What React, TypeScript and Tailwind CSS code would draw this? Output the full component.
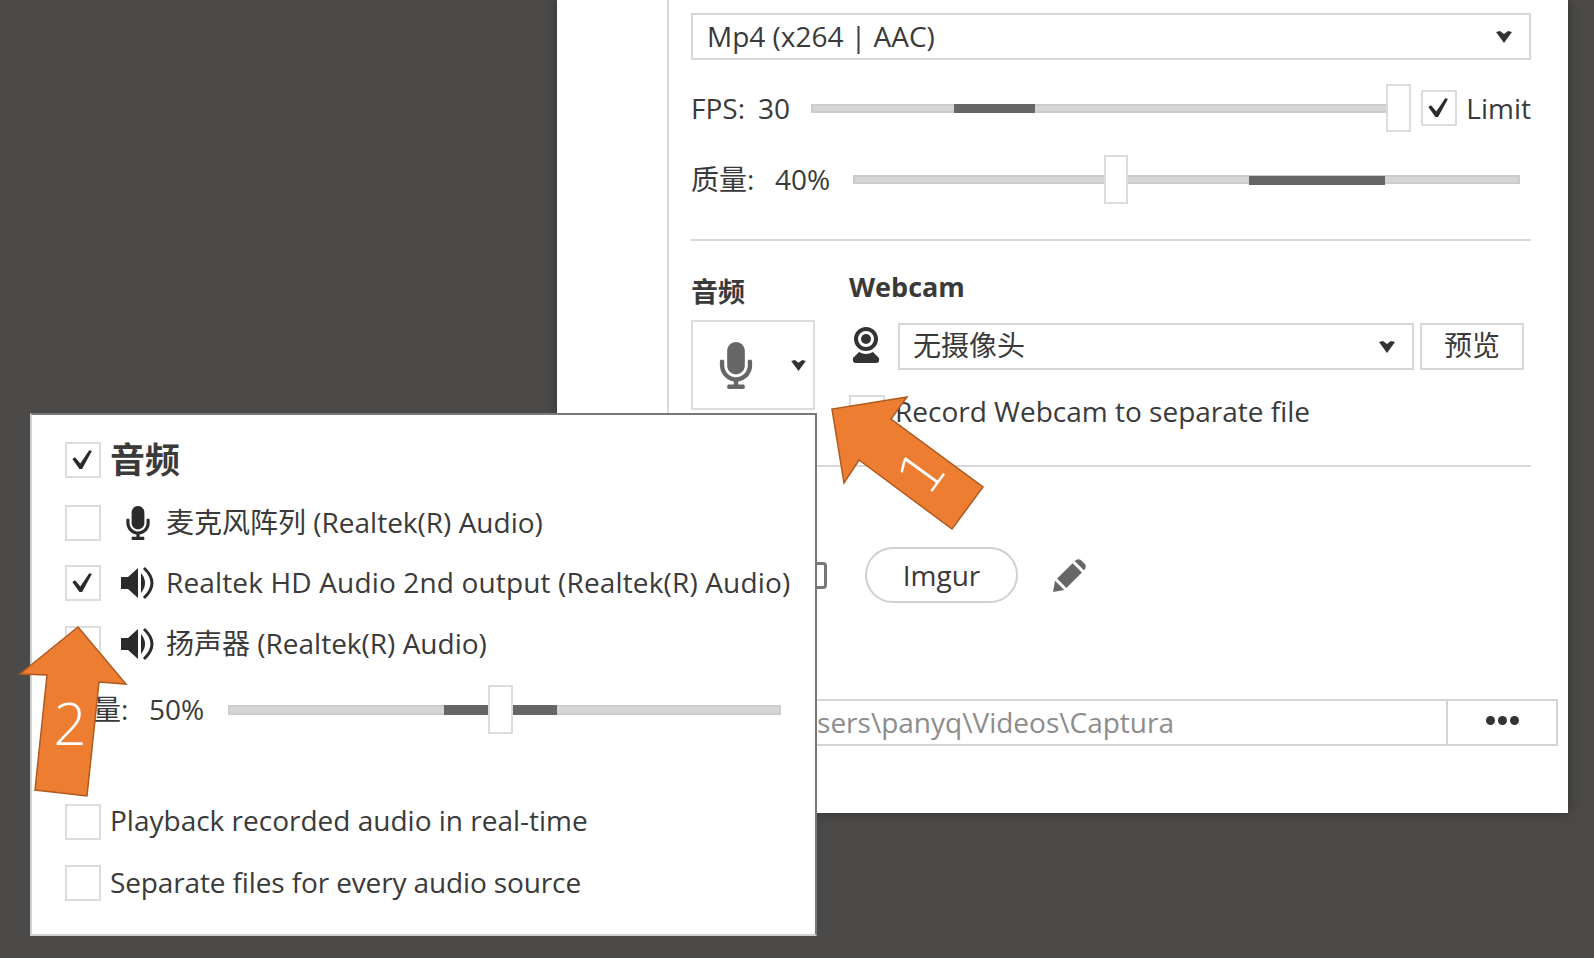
import React from "react";
import { FaMicrophone } from "react-icons/fa";

const font = "[font-family:'Open_Sans','Noto_Sans_CJK_SC',sans-serif]";

function Caret({ className }: { className: string }) {
  return (
    <svg viewBox="0 0 18 12" className={className} fill="#333">
      <path d="M1 1 L5 0 L9 3 L13 0 L17 1 L9 12 Z" />
    </svg>
  );
}

function Box({ checked }: { checked?: boolean }) {
  return (
    <div className="w-[36px] h-[36px] shrink-0 border-2 border-[#dcdcdc] bg-white flex items-center justify-center">
      {checked && (
        <svg viewBox="0 0 36 36" className="w-[36px] h-[36px]" fill="#2b2b2b">
          <path d="M6 17 L9 15 L15 22 L25 7 L28 8 L17 28 L14 28 Z" />
        </svg>
      )}
    </div>
  );
}

function Webcam() {
  return (
    <svg viewBox="0 0 28 36" className="w-[28px] h-[36px]" fill="#333">
      <path fillRule="evenodd" d="M14 0 A12 12 0 1 1 14 24 A12 12 0 1 1 14 0 Z M14 4 A8 8 0 1 0 14 20 A8 8 0 1 0 14 4 Z" />
      <circle cx="14" cy="12" r="5" />
      <path d="M7 25 Q14 29 21 25 L27 31 Q28 36 24 36 L4 36 Q0 36 1 31 Z" />
    </svg>
  );
}

function Speaker() {
  return (
    <svg viewBox="0 0 36 36" className="w-[36px] h-[36px]" fill="#2b2b2b">
      <path d="M1 12 L8 12 L18 3 L18 33 L8 24 L1 24 Z" />
      <path d="M21 8 Q29 18 21 28 Z" />
      <path d="M24 3 Q40 18 24 33" fill="none" stroke="#2b2b2b" strokeWidth="3" />
    </svg>
  );
}

function Pencil() {
  return (
    <svg viewBox="0 0 32 32" className="w-[33px] h-[33px]" fill="#666666">
      <path d="M4 19 L19 4 L28 13 L13 28 Z" />
      <path d="M0 32 L2 21 L11 30 Z" />
      <path d="M21 2 Q24 -1 27 1 L31 5 Q33 8 30 11 Z" />
    </svg>
  );
}

export default function App() {
  return (
    <div className={`relative w-[1594px] h-[958px] overflow-hidden bg-[#4b4a48] text-[#3a3a3a] text-[28px] ${font}`}>
      {/* main window */}
      <div className="absolute left-[557px] top-0 w-[1011px] h-[813px] bg-white shadow-[0_0_12px_rgba(0,0,0,0.35)] flex">
        <div className="w-[112px] shrink-0 border-r-2 border-[#dadada]" />
        <div className="w-[862px] pl-[22px] flex flex-col">
          <div className="w-[840px] mt-[13px] h-[47px] border-2 border-[#d6d6d6] flex items-center justify-between pl-[14px] pr-[16px]">
            <span className="-mt-[2px]">Mp4 (x264 | AAC)</span>
            <Caret className="w-[18px] h-[12px]" />
          </div>

          <div className="w-[840px] mt-[24px] h-[48px] flex items-center">
            <span className="w-[67px] shrink-0">FPS:</span>
            <span className="w-[53px] shrink-0">30</span>
            <div className="relative w-[600px] h-[48px] flex items-center">
              <div className="w-[597px] h-[9px] bg-[#d6d6d6] border-2 border-[#cccccc]" />
              <div className="absolute left-[143px] top-[20px] w-[81px] h-[9px] bg-[#666666]" />
              <div className="absolute left-[575px] top-0 w-[25px] h-[48px] bg-white border-2 border-[#dcdcdc]" />
            </div>
            <div className="ml-[11px]"><Box checked /></div>
            <span className="ml-[9px]">Limit</span>
          </div>

          <div className="w-[840px] mt-[23px] h-[49px] flex items-center">
            <span className="w-[84px] shrink-0 -mt-[2px]">质量:</span>
            <span className="w-[78px] shrink-0 -mt-[2px]">40%</span>
            <div className="relative w-[667px] h-[49px] flex items-center">
              <div className="w-[667px] h-[9px] bg-[#d6d6d6] border-2 border-[#cccccc]" />
              <div className="absolute left-[396px] top-[21px] w-[136px] h-[9px] bg-[#666666]" />
              <div className="absolute left-[251px] top-0 w-[24px] h-[49px] bg-white border-2 border-[#dcdcdc]" />
            </div>
          </div>

          <div className="w-[840px] mt-[35px] h-[2px] bg-[#d8d8d8]" />

          <div className="flex mt-[29px]">
            <div className="w-[158px] shrink-0">
              <div className="h-[36px] mt-[4px] leading-[36px] font-bold text-[27px]">音频</div>
              <div className="mt-[10px] w-[124px] h-[90px] border-2 border-[#dcdcdc] flex items-center pl-[26px] gap-[37px]">
                <FaMicrophone className="w-[34px] h-[47px] text-[#666666]" />
                <Caret className="w-[17px] h-[11px]" />
              </div>
            </div>
            <div className="w-[682px]">
              <div className="h-[34px] leading-[34px] font-bold text-[27px]">Webcam</div>
              <div className="flex items-center mt-[19px]">
                <div className="ml-[3px] mr-[18px] -mt-[4px]"><Webcam /></div>
                <div className="w-[516px] h-[47px] border-2 border-[#d6d6d6] flex items-center justify-between pl-[13px] pr-[16px]">
                  <span className="-mt-[4px]">无摄像头</span>
                  <Caret className="w-[18px] h-[12px]" />
                </div>
                <div className="ml-[6px] w-[104px] h-[47px] border-2 border-[#d6d6d6] flex items-center justify-center"><span className="-mt-[4px]">预览</span></div>
              </div>
              <div className="flex items-center mt-[23px]">
                <Box />
                <span className="ml-[10px] -mt-[3px]">Record Webcam to separate file</span>
              </div>
            </div>
          </div>

          <div className="w-[840px] mt-[33px] h-[2px] bg-[#d8d8d8]" />

          <div className="flex items-center mt-[80px] ml-[110px]">
            <div className="w-[26px] h-[27px] rounded-[4px] border-[3px] border-[#777777]" />
            <div className="ml-[38px] w-[153px] h-[56px] rounded-[28px] border-2 border-[#d0d0d0] flex items-center justify-center">Imgur</div>
            <div className="ml-[35px]"><Pencil /></div>
          </div>

          <div className="flex mt-[96px] w-[867px] h-[47px]">
            <div className="flex-1 min-w-0 border-2 border-r-0 border-[#d4d4d4] flex items-center justify-end pr-[272px] text-[#8c8c8c] whitespace-nowrap"><span className="-mt-[2px]">C:\Users\panyq\Videos\Captura</span></div>
            <div className="w-[112px] shrink-0 border-2 border-[#d4d4d4] flex items-center justify-center gap-[3px] pb-[4px]">
              <span className="w-[9px] h-[9px] rounded-full bg-[#333333]" />
              <span className="w-[9px] h-[9px] rounded-full bg-[#333333]" />
              <span className="w-[9px] h-[9px] rounded-full bg-[#333333]" />
            </div>
          </div>
        </div>
      </div>

      {/* audio popup */}
      <div className="absolute left-[30px] top-[413px] w-[787px] h-[523px] bg-white border-2 border-[#d0d0d0] border-t-[#777777] border-r-[#777777] pl-[33px] flex flex-col">
        <div className="flex items-center mt-[27px] h-[36px]">
          <Box checked />
          <span className="ml-[9px] font-bold text-[35px]">音频</span>
        </div>
        <div className="flex items-center mt-[27px] h-[36px]">
          <Box />
          <FaMicrophone className="ml-[22px] w-[30px] h-[34px] text-[#2b2b2b]" />
          <span className="ml-[13px] -mt-[2px] whitespace-nowrap">麦克风阵列 (Realtek(R) Audio)</span>
        </div>
        <div className="flex items-center mt-[24px] h-[36px]">
          <Box checked />
          <div className="ml-[19px]"><Speaker /></div>
          <span className="ml-[10px] -mt-[2px] whitespace-nowrap tracking-[0.15px]">Realtek HD Audio 2nd output (Realtek(R) Audio)</span>
        </div>
        <div className="flex items-center mt-[25px] h-[36px]">
          <Box />
          <div className="ml-[19px]"><Speaker /></div>
          <span className="ml-[10px] -mt-[2px] whitespace-nowrap">扬声器 (Realtek(R) Audio)</span>
        </div>
        <div className="flex items-center mt-[23px] h-[49px]">
          <span className="w-[84px] shrink-0 -mt-[2px]">音量:</span>
          <span className="w-[79px] shrink-0 -mt-[2px]">50%</span>
          <div className="relative w-[553px] h-[49px] flex items-center">
            <div className="w-[553px] h-[10px] bg-[#d6d6d6] border-2 border-[#cccccc]" />
            <div className="absolute left-[216px] top-[20px] w-[113px] h-[10px] bg-[#666666]" />
            <div className="absolute left-[260px] top-0 w-[25px] h-[49px] bg-white border-2 border-[#dcdcdc]" />
          </div>
        </div>
        <div className="flex items-center mt-[70px] h-[36px]">
          <Box />
          <span className="ml-[9px] -mt-[4px] whitespace-nowrap">Playback recorded audio in real-time</span>
        </div>
        <div className="flex items-center mt-[25px] h-[36px]">
          <Box />
          <span className="ml-[9px] -mt-[2px] whitespace-nowrap tracking-[-0.13px]">Separate files for every audio source</span>
        </div>
      </div>

      {/* arrows */}
      <svg viewBox="0 0 1594 958" className="absolute left-0 top-0 w-[1594px] h-[958px]">
        <polygon points="907,397 832,409 844,483 859,460 952,529 983,487 891,419" fill="#ed7d31" stroke="#ae5a21" strokeWidth="1.5" />
        <polygon points="78,627 126,684 99,682 87,796 35,790 47,675 20,674" fill="#ed7d31" stroke="#ae5a21" strokeWidth="1.5" />
      </svg>
      <span className="absolute left-[892px] top-[437px] w-[60px] h-[70px] leading-[70px] text-center text-white text-[58px] font-extralight [font-family:'DejaVu_Sans',sans-serif] -rotate-[54deg]">1</span>
      <span className="absolute left-[50px] top-[690px] w-[40px] h-[66px] leading-[66px] text-center text-white text-[58px] font-light">2</span>
    </div>
  );
}
